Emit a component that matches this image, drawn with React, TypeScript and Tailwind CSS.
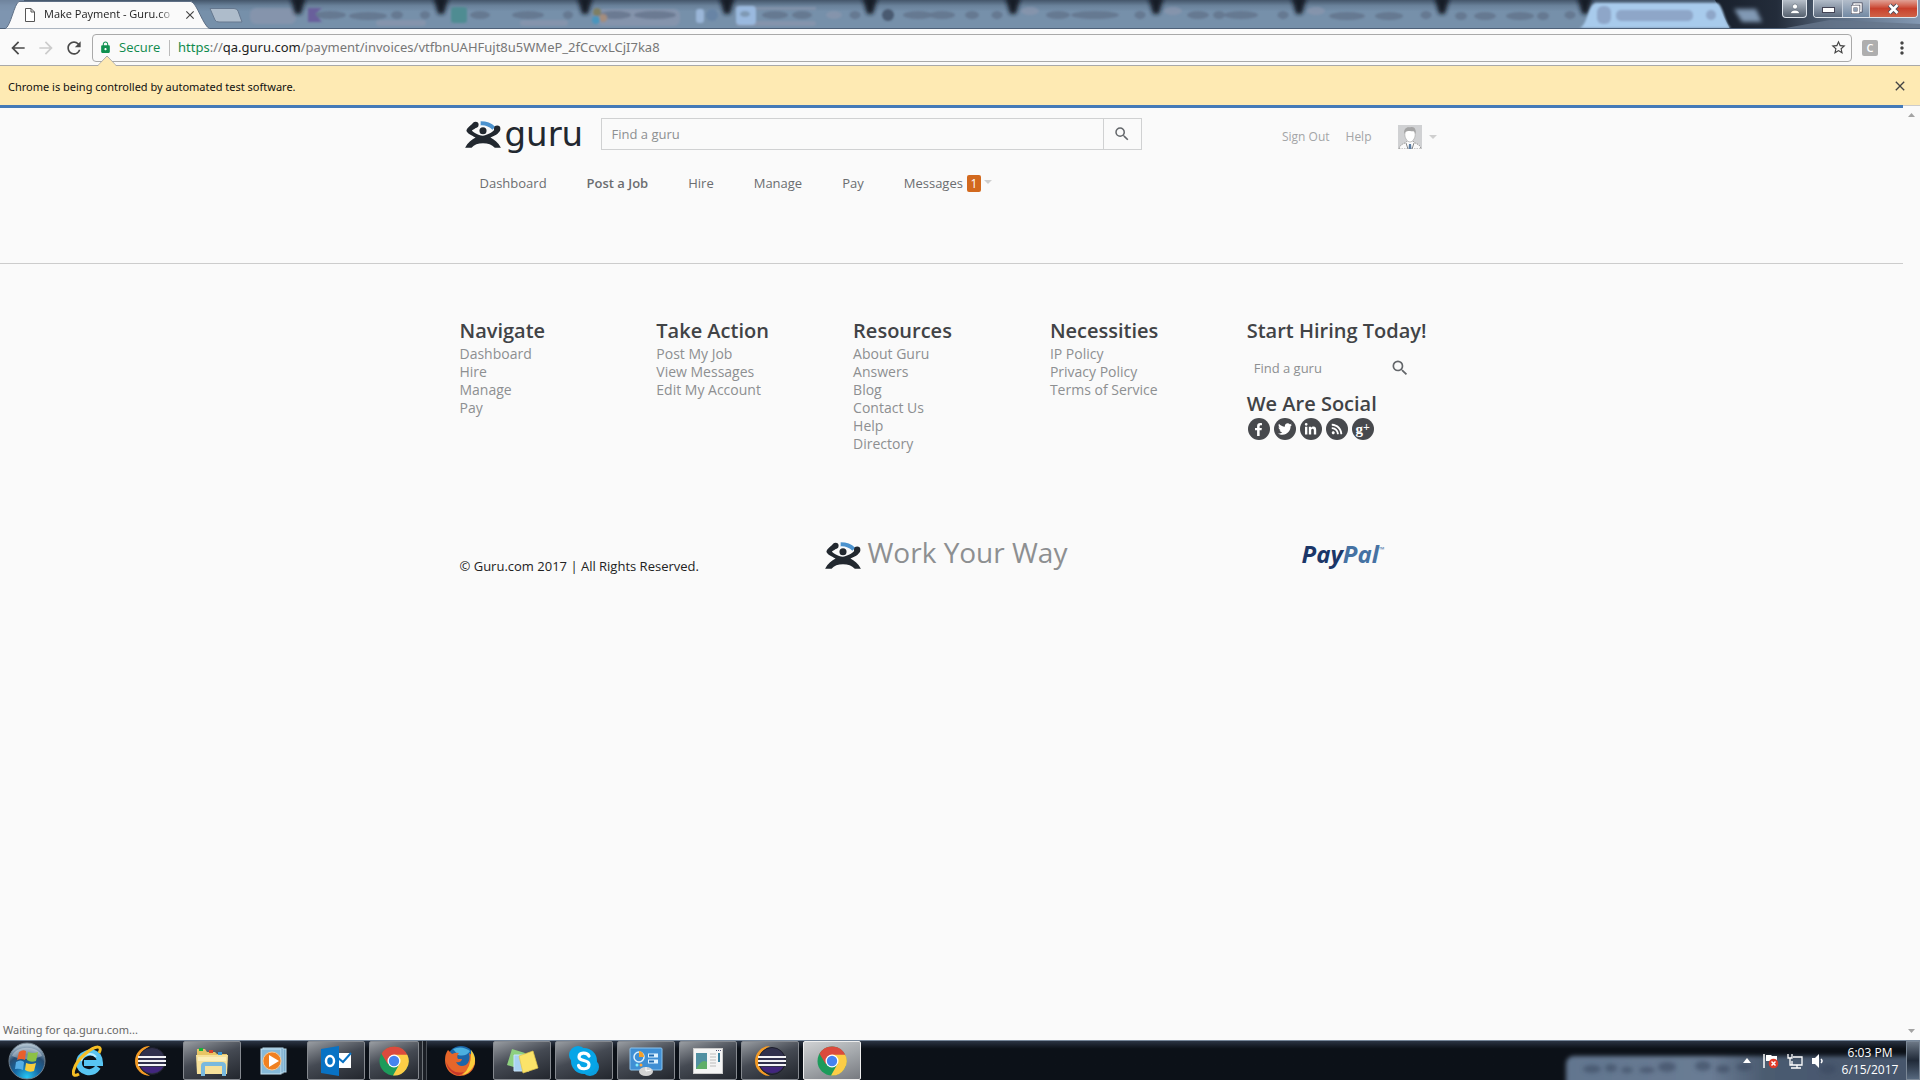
import React from "react";
import { FaFacebookF, FaTwitter, FaLinkedinIn, FaRss } from "react-icons/fa";
import { MdSearch, MdArrowBack, MdArrowForward, MdRefresh, MdLock, MdStarBorder, MdMoreVert, MdClose } from "react-icons/md";

function TabStripBackdrop() {
  const notches = [298, 441, 585, 727, 870, 1013, 1156, 1299, 1442, 1585];
  const smudges = [
    [330, 14, 30], [368, 15, 36], [397, 14, 10], [425, 14, 8], [480, 14, 18], [528, 14, 30], [568, 14, 8],
    [615, 14, 30], [655, 14, 40], [775, 14, 24], [802, 14, 18], [855, 14, 9], [918, 14, 28], [942, 14, 24],
    [972, 14, 12], [997, 14, 9], [1058, 14, 22], [1095, 14, 46], [1140, 14, 9], [1198, 14, 20], [1219, 14, 10],
    [1241, 14, 32], [1283, 14, 9], [1347, 15, 34], [1389, 15, 26], [1426, 14, 9], [1461, 15, 10], [1485, 15, 20],
    [1520, 15, 26], [1543, 15, 10], [1570, 14, 9],
  ];
  return (
    <svg className="absolute inset-0 h-full w-full" viewBox="0 0 1920 29" preserveAspectRatio="none" aria-hidden="true">
      <defs>
        <linearGradient id="glass" x1="0" y1="0" x2="0" y2="1">
          <stop offset="0" stopColor="#44566a" />
          <stop offset="0.2" stopColor="#6a829b" />
          <stop offset="0.4" stopColor="#7690aa" />
          <stop offset="1" stopColor="#7690aa" />
        </linearGradient>
        <linearGradient id="corner" x1="0" y1="0" x2="1" y2="0">
          <stop offset="0" stopColor="#18202c" />
          <stop offset="0.3" stopColor="#232c3a" />
          <stop offset="0.6" stopColor="#5b6c82" />
          <stop offset="1" stopColor="#8398b2" />
        </linearGradient>
        <filter id="soft" x="-20%" y="-50%" width="140%" height="200%"><feGaussianBlur stdDeviation="2" /></filter>
        <filter id="faint" x="-20%" y="-50%" width="140%" height="200%"><feGaussianBlur stdDeviation="1.3" /></filter>
      </defs>
      <rect width="1920" height="29" fill="url(#glass)" />
      <rect x="0" width="24" height="29" fill="#8297b2" opacity="0.7" />
      <g filter="url(#faint)" fill="#8a96ad" opacity="0.75">
        <rect x="250" y="8" width="46" height="16" rx="6" />
        <rect x="376" y="20" width="50" height="6" rx="3" />
        <rect x="520" y="20" width="48" height="6" rx="3" />
        <rect x="596" y="9" width="84" height="17" rx="6" />
        <rect x="736" y="7" width="80" height="3" />
        <rect x="736" y="21" width="80" height="5" rx="3" />
        <ellipse cx="834" cy="15" rx="8" ry="4" />
        <ellipse cx="1030" cy="11" rx="9" ry="4" />
        <ellipse cx="1173" cy="11" rx="9" ry="4" />
        <ellipse cx="1316" cy="11" rx="9" ry="4" />
      </g>
      <path d="M1715 0H1920V29H1730Z" fill="url(#corner)" />
      <path d="M1780 29 1830 20 1920 24V29Z" fill="#65758b" opacity="0.8" />
      <g filter="url(#soft)" fill="#141b26">
        {notches.map((x) => <path key={x} d={`M${x - 8} -4H${x + 8}L${x + 3} 14H${x - 3}Z`} />)}
      </g>
      <g filter="url(#faint)">
        <g fill="#5f6d85" opacity="0.65">
          {smudges.map(([x, y, w]) => <ellipse key={x} cx={x} cy={y + 1} rx={w / 2 + 1} ry="4" />)}
        </g>
        <path d="M308 8h14l-7 6 7 8h-14z" fill="#695f9b" />
        <rect x="451" y="7" width="16" height="16" rx="3" fill="#4f8c92" />
        <circle cx="597" cy="12" r="4" fill="#7f7f63" />
        <circle cx="603" cy="18" r="4" fill="#a58d7d" />
        <circle cx="596" cy="20" r="4" fill="#4a95bd" />
        <rect x="696" y="9" width="8" height="14" rx="3" fill="#9ab6d8" />
        <circle cx="712" cy="15" r="6" fill="#6884a5" />
        <rect x="736" y="6" width="20" height="19" rx="4" fill="#9ab9df" />
        <ellipse cx="745" cy="14" rx="5" ry="3" fill="#7f99b4" />
        <circle cx="888" cy="15" r="6" fill="#485a70" />
      </g>
      <path d="M1580 28C1588 24 1588 4 1596 3H1717C1723 4 1725 25 1731 28Z" fill="#a8cbec" filter="url(#faint)" />
      <g filter="url(#faint)" fill="#8ea6c8">
        <rect x="1597" y="6" width="14" height="18" rx="6" />
        <rect x="1616" y="10" width="77" height="11" rx="5" />
        <ellipse cx="1711" cy="15" rx="5" ry="5" />
      </g>
      <path d="M1734 9H1756L1762 22H1742Z" fill="#8199b4" filter="url(#soft)" />
      <path d="M210 8.500H234Q237 8.500 238 11L242 22H219Q216 22 215 20Z" fill="#aebccb" stroke="#66788f" />
      <path d="M0 28.500H1920" stroke="#4d6078" />
      <path d="M5 29C11 26 14 4 19 1.500H191C197 3 203 26 210 29Z" fill="#fafafa" stroke="#5f7086" />
    </svg>
  );
}

function TabStrip() {
  return (
    <div className="relative h-[29px] overflow-hidden">
      <TabStripBackdrop />
      <div className="relative flex h-full items-start justify-between">
        <div className="flex h-[29px] items-center pl-6 text-[11px] text-[#222]">
          <svg className="h-4 w-3" viewBox="0 0 12 16" fill="#fff" stroke="#555" aria-hidden="true">
            <path d="M1.500 1.500H7L10.500 5V14.500H1.500ZM7 1.500V5H10.500" />
          </svg>
          <span className="ml-2 w-[131px] whitespace-nowrap [mask-image:linear-gradient(to_right,#000_88%,transparent)]">Make Payment - Guru.co</span>
          <button aria-label="Close tab" className="ml-2 text-[#444]"><MdClose size={14} /></button>
        </div>
        <div className="flex pr-[2px]">
          <button aria-label="Profile" className="mr-[6px] flex h-[18px] w-[25px] items-center justify-center rounded-b border border-t-0 border-[#dfe5ec] bg-linear-to-b from-[#b8c0ca] to-[#56616f]">
            <svg width="10" height="11" viewBox="0 0 10 11" fill="#fff" stroke="#44505f" strokeWidth=".5"><circle cx="5" cy="3.500" r="2.500" /><path d="M.5 10.500C.5 6 9.500 6 9.500 10.500Z" /></svg>
          </button>
          <div className="flex h-[18px] overflow-hidden rounded-b border border-t-0 border-[#dfe5ec]">
            <button aria-label="Minimize" className="flex w-[29px] items-end justify-center border-r border-[#c5ced9] bg-linear-to-b from-[#b3bdca] to-[#5d6b7e] pb-1">
              <svg width="13" height="6"><rect x=".5" y=".5" width="12" height="5" fill="#fff" stroke="#445" /></svg>
            </button>
            <button aria-label="Restore" className="flex w-[27px] items-center justify-center border-r border-[#c5ced9] bg-linear-to-b from-[#b3bdca] to-[#7289a3]">
              <svg width="13" height="13" fill="none"><path d="M4 3.500V2h7v7H9.500" stroke="#445" strokeWidth="3" /><path d="M4 3.500V2h7v7H9.500" stroke="#fff" strokeWidth="1.500" /><rect x="2.500" y="4.500" width="6" height="6" stroke="#445" strokeWidth="3" /><rect x="2.500" y="4.500" width="6" height="6" stroke="#fff" strokeWidth="2" /></svg>
            </button>
            <button aria-label="Close window" className="flex w-[47px] items-center justify-center bg-linear-to-b from-[#e0a196] via-[#c8402c] to-[#cf6247]">
              <svg width="13" height="12"><path d="M2.500 2 10.500 10M10.500 2 2.500 10" stroke="#444b5c" strokeWidth="4.500" /><path d="M2.500 2 10.500 10M10.500 2 2.500 10" stroke="#fff" strokeWidth="2.600" /></svg>
            </button>
          </div>
        </div>
      </div>
    </div>
  );
}

function Toolbar() {
  return (
    <div className="relative flex h-[37px] items-center border-b border-[#a9a9a9] bg-[#fafafa] pt-px">
      <div className="flex w-[92px] items-center gap-2 pl-2 text-[#4a4a4a]">
        <button aria-label="Back"><MdArrowBack size={20} /></button>
        <button aria-label="Forward" className="text-[#ccc]"><MdArrowForward size={20} /></button>
        <button aria-label="Reload"><MdRefresh size={20} /></button>
      </div>
      <div className="flex h-7 flex-1 items-center rounded-sm border border-[#a9a9a9] pr-1 pl-[6px] text-[13px]">
        <MdLock size={13} className="text-[#0f9150]" />
        <span className="ml-[7px] w-[50px] text-[#0f8a4d]">Secure</span>
        <span className="mr-2 h-4 w-px bg-[#bbb]" />
        <p className="flex-1 font-['Noto_Sans',sans-serif] whitespace-nowrap text-[#777]">
          <span className="text-[#0f8a4d]">https</span>://<span className="text-[#222]">qa.guru.com</span>/payment/invoices/vtfbnUAHFujt8u5WMeP_2fCcvxLCjI7ka8
        </p>
        <button aria-label="Bookmark this page" className="text-[#444]"><MdStarBorder size={17} /></button>
      </div>
      <button aria-label="Extension" className="ml-[10px] h-4 w-4 rounded-xs bg-[#aeaeae] text-[11px] leading-4 font-semibold text-white">C</button>
      <button aria-label="Menu" className="mr-2 ml-[14px] text-[#444]"><MdMoreVert size={20} /></button>
      <svg className="absolute left-24 -bottom-px" width="22" height="11" viewBox="0 0 22 11" fill="#feeab3" aria-hidden="true">
        <path d="M0 10.500H2L11 1L20 10.500H22" stroke="#a9a9a9" /><path d="M2 11 11 2 20 11Z" />
      </svg>
    </div>
  );
}

function Figure({ className }: { className: string }) {
  return (
    <svg className={className} viewBox="30 28 106 80" aria-hidden="true">
      <path d="M76 29C94 29 108 34 119 45L111 54C101 45 90 40 76 41Z" fill="#4b92ce" />
      <g fill="#22282f">
        <circle cx="61" cy="39" r="9" />
        <circle cx="125" cy="51" r="9.500" />
        <circle cx="83" cy="57" r="10.500" />
        <path d="M53 35C42 45 34 51 34 57C36 65 48 70 61 77C50 83 37 92 30 107H49C57 98 68 94 83 94S109 98 118 107H136C129 92 116 83 105 77C118 72 131 65 134 54L119 51C113 60 100 68 83 72C67 69 54 62 50 56C54 53 60 50 68 44Z" />
      </g>
    </svg>
  );
}

const Caret = ({ className }: { className: string }) => (
  <svg className={className} width="8" height="4" viewBox="0 0 8 4" aria-hidden="true"><path d="M0 0H8L4 4Z" fill="#cfcfcf" /></svg>
);

function SiteHeader() {
  return (
    <header className="mx-auto w-full max-w-[984px] pt-[10px]">
      <div className="flex h-8 items-stretch pl-[5px]">
        <a href="#" aria-label="guru" className="flex w-[136px] items-center text-[#22282f]">
          <Figure className="h-[27px] w-[36px] shrink-0" />
          <span className="ml-1 font-['DejaVu_Sans'] text-[34px] leading-7">guru</span>
        </a>
        <form className="flex w-[541px]">
          <input aria-label="Find a guru" placeholder="Find a guru" className="min-w-0 flex-1 border border-[#d0d1d2] bg-transparent px-[10px] pt-[2px] text-[13px] placeholder:text-[#8d8f91]" />
          <button type="button" aria-label="Search" className="flex w-[38px] items-center justify-center border border-l-0 border-[#d0d1d2] text-[#63666a]"><MdSearch size={18} /></button>
        </form>
        <div className="ml-auto flex items-center gap-4 pt-[6px] pr-[5px] text-[12px] text-[#a3a5a7]">
          <a href="#">Sign Out</a>
          <a href="#">Help</a>
          <a href="#" aria-label="Account" className="ml-[10px] flex items-center gap-[7px]">
            <svg width="24" height="24" viewBox="0 0 24 24">
              <rect width="24" height="24" fill="#d0d1d3" />
              <path d="M1 24C2 18 8 19 9 16H15C16 19 22 18 23 24Z" fill="#fafafa" stroke="#999" strokeDasharray="1.500 1" />
              <path d="M7 8C7 4 9 3 12 3S17 4 17 8C18 12 15 17 12 17S6 12 7 8Z" fill="#fff" stroke="#aaa" strokeWidth=".7" />
              <path d="M6.500 9C5 4 9 1.500 12 2.500C16 1 18.500 4 17.500 9C16 5 15 7 12 6C9 6 7.500 6 6.500 9Z" fill="#a5a5a5" />
              <path d="M11 19H13L13.500 24H10.500Z" fill="#5c7da3" /><path d="M8 18 10 24M16 18 14 24" stroke="#888" />
            </svg>
            <Caret className="mr-[2px]" />
          </a>
        </div>
      </div>
      <nav className="mt-[23px] flex h-[22px] items-center gap-10 pl-5 text-[13px] text-[#6b6d70]">
        <a href="#">Dashboard</a>
        <a href="#" className="font-semibold">Post a Job</a>
        <a href="#">Hire</a>
        <a href="#">Manage</a>
        <a href="#">Pay</a>
        <a href="#" className="flex items-center">
          Messages
          <span className="mb-px ml-1 h-[17px] w-[14px] rounded-xs bg-[#d2691e] text-center text-[12px] leading-[17px] text-white">1</span>
          <Caret className="mb-1 ml-[3px]" />
        </a>
      </nav>
    </header>
  );
}

const columns = [
  { title: "Navigate", links: ["Dashboard", "Hire", "Manage", "Pay"] },
  { title: "Take Action", links: ["Post My Job", "View Messages", "Edit My Account"] },
  { title: "Resources", links: ["About Guru", "Answers", "Blog", "Contact Us", "Help", "Directory"] },
  { title: "Necessities", links: ["IP Policy", "Privacy Policy", "Terms of Service"] },
];

const heading = "whitespace-nowrap text-[20px] leading-6 font-semibold text-[#414346]";
const social = "flex h-[22px] w-[22px] items-center justify-center rounded-full bg-[#47494d] text-white";

function SiteFooter() {
  return (
    <footer className="mt-[68px] border-t border-[#ccc] pt-[55px]">
      <div className="mx-auto max-w-[984px]">
        <div className="grid grid-cols-5">
          {columns.map((c) => (
            <section key={c.title}>
              <h2 className={heading}>{c.title}</h2>
              <ul className="mt-[2px] text-[14px] leading-[18px] text-[#8d8f91]">
                {c.links.map((l) => <li key={l}><a href="#">{l}</a></li>)}
              </ul>
            </section>
          ))}
          <section>
            <h2 className={heading}>Start Hiring Today!</h2>
            <form className="flex h-[49px] items-center pl-[7px]">
              <input aria-label="Find a guru" placeholder="Find a guru" className="w-[136px] bg-transparent pt-[2px] text-[13px] placeholder:text-[#8d8f91]" />
              <button type="button" aria-label="Search" className="text-[#63666a]"><MdSearch size={20} /></button>
            </form>
            <h2 className={heading}>We Are Social</h2>
            <div className="mt-[2px] flex gap-1 pl-px">
              <a href="#" aria-label="Facebook" className={social}><FaFacebookF size={13} /></a>
              <a href="#" aria-label="Twitter" className={social}><FaTwitter size={14} /></a>
              <a href="#" aria-label="LinkedIn" className={social}><FaLinkedinIn size={13} /></a>
              <a href="#" aria-label="RSS" className={social}><FaRss size={12} /></a>
              <a href="#" aria-label="Google Plus" className={`${social} font-['Liberation_Serif'] text-[15px] leading-4 font-bold`}>g<span className="mb-1 text-[12px]">+</span></a>
            </div>
          </section>
        </div>
        <div className="mt-[75px] grid h-10 grid-cols-[365fr_477fr_142fr] items-center whitespace-nowrap">
          <p className="pt-[29px] text-[13px] text-[#222]">© Guru.com 2017 | All Rights Reserved.</p>
          <p className="flex items-center text-[28px] leading-10 text-[#8d8f91]">
            <Figure className="mt-[6px] mr-[7px] h-[27px] w-[36px]" />
            Work Your Way
          </p>
          <p className="flex items-center pt-1 text-[24px] leading-6 font-bold text-[#1b3668] italic">Pay<span className="text-[#4572a3]">Pal</span><span className="self-start text-[7px] leading-4 font-normal text-[#4572a3]">™</span></p>
        </div>
      </div>
    </footer>
  );
}

const OrbIcon = () => (
  <svg width="38" height="38" viewBox="0 0 38 38">
    <defs><radialGradient id="orb" cx=".5" cy=".95" r=".9"><stop offset="0" stopColor="#27c8f5" /><stop offset=".4" stopColor="#1668a4" /><stop offset=".7" stopColor="#274c70" /><stop offset="1" stopColor="#b0c2d0" /></radialGradient></defs>
    <circle cx="19" cy="19" r="18" fill="url(#orb)" stroke="#71818f" />
    <path d="M4 14C8 3 30 3 34 14C26 18 12 18 4 14Z" fill="#fff" opacity=".35" />
    <path d="M11 10Q15 7 18 9L17 18Q13 16 9 18Z" fill="#e8602c" /><path d="M20 10Q25 12 30 10L28 19Q23 21 19 18Z" fill="#8dc145" />
    <path d="M8 20Q13 17 16 20L15 28Q11 26 7 27Z" fill="#56aee6" /><path d="M18 21Q23 23 28 21L26 29Q21 31 17 28Z" fill="#f9ce3d" />
  </svg>
);
const IeIcon = () => (
  <svg width="32" height="32" viewBox="0 0 32 32" fill="none">
    <path d="M26 22C20 31 7 27 7 18S20 4 26 11Q28 14 28 18H12" stroke="#58c5f2" strokeWidth="6" />
    <path d="M9 16C12 8 20 7 24 12" stroke="#b8ebff" strokeWidth="2" />
    <path d="M7 29C-3 35 1 19 13 9S31 1 27 8" stroke="#f4bd24" strokeWidth="3" />
  </svg>
);
const EclipseIcon = () => (
  <svg width="32" height="32" viewBox="0 0 32 32">
    <path d="M16 1A15 15 0 0 0 16 31A17 17 0 0 1 16 1Z" fill="#f49b25" />
    <circle cx="18" cy="16" r="13.500" fill="#30304c" stroke="#1c1d2a" /><path d="M7 22H29A13 13 0 0 1 7 22Z" fill="#42267f" />
    <path d="M4 12H32M4 16H32M4 20H32" stroke="#f2f2f5" strokeWidth="2.200" />
  </svg>
);
const FolderIcon = () => (
  <svg width="34" height="32" viewBox="0 0 34 32">
    <path d="M2 4H10L12 7H20L22 9H32V28H2Z" fill="#e8c565" /><path d="M4 3h4v3H4z" fill="#18b43a" /><path d="M14 5h4v3h-4z" fill="#d8422a" /><path d="M23 7h4v3h-4z" fill="#3897d8" />
    <path d="M1 10H33L32 29H2Z" fill="#f6e19b" /><path d="M3 12H31V16H3Z" fill="#fbeebb" />
    <path d="M8 31V21Q8 19 10 19H27Q29 19 29 21V31" fill="none" stroke="#79b9de" strokeWidth="4" />
  </svg>
);
const PlayerIcon = () => (
  <svg width="28" height="28" viewBox="0 0 28 28">
    <rect x="6" y="2" width="20" height="23" fill="#78aacb" stroke="#b9dcee" /><rect x="3" y="1" width="20" height="25" fill="#5c91b9" stroke="#b9dcee" /><rect x="1" y="2" width="20" height="25" fill="#86b9d8" stroke="#c9e5f3" />
    <circle cx="12" cy="14" r="9" fill="#f08020" stroke="#f8c791" /><path d="M9 8V20L19 14Z" fill="#fff" />
  </svg>
);
const OutlookIcon = () => (
  <svg width="32" height="32" viewBox="0 0 32 32">
    <rect x="15" y="8" width="16" height="15" fill="#fff" /><path d="M17 12 23 17 31 8" fill="none" stroke="#0872c4" strokeWidth="2" />
    <path d="M1 4 19 1V31L1 28Z" fill="#0872c4" /><ellipse cx="10" cy="16" rx="4" ry="5" fill="none" stroke="#fff" strokeWidth="2.500" />
  </svg>
);
const ChromeIcon = () => (
  <svg width="30" height="30" viewBox="0 0 30 30">
    <circle cx="15" cy="15" r="14.500" fill="#1d9b5b" /><path d="M2.500 7.700A14.500 14.500 0 0 1 28.500 9.500H15L8.700 18Z" fill="#db4a3d" />
    <path d="M15 8.800H28.300A14.500 14.500 0 0 1 14 29.500L20.500 18Z" fill="#fccd46" /><circle cx="15" cy="15" r="6.500" fill="#fff" /><circle cx="15" cy="15" r="5.200" fill="#4583f0" />
  </svg>
);
const FirefoxIcon = () => (
  <svg width="32" height="32" viewBox="0 0 32 32">
    <circle cx="17" cy="15" r="14" fill="#1c66a8" /><path d="M9 4Q18 0 26 6Q22 12 14 10Z" fill="#4bb0df" />
    <path d="M4 5 8 9Q12 7 15 8Q12 11 14 14H18Q17 18 12 17Q15 23 22 20Q27 16 25 8Q32 12 31 19C29 28 21 31 16 31C7 31 1 24 1 15Q1 9 4 5Z" fill="#e6662a" />
    <path d="M27 5Q34 14 29 22Q25 29 18 30Q28 23 27 5Z" fill="#f9cd3c" /><path d="M2 17Q8 30 20 27Q17 31 13 30Q4 27 2 17Z" fill="#c7382b" />
  </svg>
);
const NotesIcon = () => (
  <svg width="34" height="30" viewBox="0 0 34 30">
    <path d="M7 3 20 7 15 23 2 19Z" fill="#8ed07f" /><path d="M9 9H24V25H9Z" fill="#a9d1f1" stroke="#c8e5fa" /><path d="M14 10 28 5 33 22 18 27Z" fill="#fbe369" stroke="#e3c54a" strokeWidth=".7" />
  </svg>
);
const SkypeIcon = () => (
  <svg width="32" height="32" viewBox="0 0 32 32">
    <circle cx="10" cy="10" r="9" fill="#06a5e7" /><circle cx="22" cy="22" r="9" fill="#0b9fe0" /><circle cx="16" cy="16" r="13" fill="#06a5e7" />
    <path d="M21 11C19 7 11 7 11 12C11 17 21 14 21 19.500C21 25 12 25 10.500 20.500" fill="none" stroke="#fff" strokeWidth="3.200" strokeLinecap="round" />
  </svg>
);
const PanelIcon = () => (
  <svg width="34" height="30" viewBox="0 0 34 30">
    <rect x="1" y="2" width="32" height="22" rx="1" fill="#3f8fd4" stroke="#8cc3ec" /><circle cx="10" cy="11" r="5" fill="none" stroke="#d8efff" strokeWidth="1.500" /><path d="M10 11V5A5.500 5.500 0 0 1 15 11Z" fill="#f4a02a" />
    <path d="M19 9.500h10M19 15.500h10" stroke="#dff3ff" strokeWidth="4" /><path d="M20 9.500h5M20 15.500h5" stroke="#1f6bb2" strokeWidth="2" /><circle cx="8" cy="19" r="1.500" fill="#7ff0ff" /><circle cx="12" cy="19" r="1.500" fill="#ffa63c" />
    <ellipse cx="17" cy="25.500" rx="7" ry="4.500" fill="#d4d4d4" /><path d="M17 21V25L22 24" stroke="#fff" fill="none" />
  </svg>
);
const WindowIcon = () => (
  <svg width="30" height="26" viewBox="0 0 30 26">
    <rect x=".5" y=".5" width="29" height="25" fill="#f5f5f5" stroke="#ccc" /><path d="M23 2.500h5" stroke="#557" strokeDasharray="1 1" />
    <rect x="3" y="5" width="11" height="16" fill="#5190a2" /><path d="M3 21Q9 10 14 14V21Z" fill="#5fae68" /><path d="M17 6H23M17 9H23M17 12H23M17 15H23M17 18H23" stroke="#bbb" /><path d="M26 5V14" stroke="#377f9e" strokeWidth="2" />
  </svg>
);

const slot = "flex h-[39px] w-[58px] items-center justify-center";
const running = "flex h-[39px] w-[58px] items-center justify-center rounded-xs border border-[#85898f] bg-linear-160 from-[#999da2] via-[#454a53] via-45% to-[#23272e]";

function Taskbar() {
  return (
    <div className="relative flex h-10 items-start overflow-hidden border-t border-[#77879a] bg-linear-to-b from-[#2b3443] to-[#0c1118] to-20% text-white">
      <button aria-label="Start" className="flex h-[39px] w-[54px] items-center justify-center"><OrbIcon /></button>
      <div className="ml-[5px] flex flex-1 items-center gap-1">
        <button aria-label="Internet Explorer" className={slot}><IeIcon /></button>
        <button aria-label="Eclipse" className={slot}><EclipseIcon /></button>
        <button aria-label="File Explorer" className={running}><FolderIcon /></button>
        <button aria-label="Media Player" className={slot}><PlayerIcon /></button>
        <button aria-label="Outlook" className={running}><OutlookIcon /></button>
        <span className="flex w-[58px]">
          <button aria-label="Chrome" className="flex h-[39px] w-[50px] items-center justify-center rounded-xs border border-[#85898f] bg-linear-160 from-[#999da2] via-[#454a53] via-45% to-[#23272e]"><ChromeIcon /></button>
          <span className="h-[39px] w-1 border-r border-[#6d7278] bg-[#23272e]" />
          <span className="h-[39px] w-1 border-r border-[#4b5057] bg-[#1a1e25]" />
        </span>
        <button aria-label="Firefox" className={slot}><FirefoxIcon /></button>
        <button aria-label="Sticky Notes" className={running}><NotesIcon /></button>
        <button aria-label="Skype" className={running}><SkypeIcon /></button>
        <button aria-label="Control Panel" className={running}><PanelIcon /></button>
        <button aria-label="Application" className={running}><WindowIcon /></button>
        <button aria-label="Eclipse window" className={running}><EclipseIcon /></button>
        <button aria-label="Chrome window" className="flex h-[39px] w-[58px] items-center justify-center rounded-xs border border-[#eee] bg-linear-160 from-[#d0d2d3] via-[#a3a7ab] to-[#777a80]"><ChromeIcon /></button>
      </div>
      <svg className="absolute top-0 right-0" width="360" height="39" viewBox="0 0 360 39" aria-hidden="true">
        <defs>
          <linearGradient id="haze" x1="0" x2="1"><stop offset="0" stopColor="#62768f" /><stop offset=".4" stopColor="#6a7c94" /><stop offset=".55" stopColor="#4b5b70" /><stop offset="1" stopColor="#46566c" /></linearGradient>
          <filter id="hazeblur" x="-10%" y="-50%" width="120%" height="200%"><feGaussianBlur stdDeviation="2" /></filter>
        </defs>
        <rect x="6" y="15" width="362" height="34" rx="8" fill="url(#haze)" filter="url(#hazeblur)" />
        <g fill="#3b4a60" opacity=".6" filter="url(#hazeblur)">
          <ellipse cx="32" cy="28" rx="9" ry="4" /><ellipse cx="51" cy="27" rx="6" ry="4" /><ellipse cx="67" cy="29" rx="6" ry="3" /><ellipse cx="87" cy="29" rx="8" ry="3" />
          <ellipse cx="107" cy="26" rx="9" ry="5" /><ellipse cx="143" cy="25" rx="8" ry="5" /><ellipse cx="163" cy="28" rx="7" ry="4" /><ellipse cx="184" cy="26" rx="8" ry="4" /><ellipse cx="268" cy="28" rx="8" ry="5" />
        </g>
      </svg>
      <div className="relative flex h-[39px] items-center">
        <svg className="mr-3" width="8" height="5"><path d="M0 5 4 0 8 5Z" fill="#fff" /></svg>
        <svg className="mr-2" width="16" height="16" viewBox="0 0 16 16"><path d="M1 1V15" stroke="#fff" strokeWidth="1.500" /><path d="M3 2H8L9 3H14V9H8L7 8H3Z" fill="#fff" /><circle cx="10.500" cy="10.500" r="4.800" fill="#e03a28" /><path d="M8.500 8.500 12.500 12.500M12.500 8.500 8.500 12.500" stroke="#fff" strokeWidth="1.500" /></svg>
        <svg className="mr-2" width="16" height="16" viewBox="0 0 16 16" fill="none" stroke="#fff" strokeWidth="1.300"><path d="M6 4H15V12H5V8M4 15H14M10 12V15M1 1V5H5V1M3 5V12H5" /></svg>
        <svg className="mr-3" width="16" height="16" viewBox="0 0 16 16"><path d="M1 5H4L8 1V15L4 11H1Z" fill="#fff" /><path d="M10 6Q12 8 10 10" fill="none" stroke="#fff" strokeWidth="1.500" /></svg>
        <p className="w-[62px] text-center text-[12px] leading-[17px] whitespace-nowrap">6:03 PM<br />6/15/2017</p>
        <button aria-label="Show desktop" className="ml-[5px] h-[39px] w-[14px] border border-[#7a8796] bg-linear-to-b from-[#6c7785] via-[#202a38] to-[#56687e]" />
      </div>
    </div>
  );
}

export default function App() {
  return (
    <div className="flex min-h-screen flex-col bg-[#fafafa] font-['Open_Sans',sans-serif]">
      <TabStrip />
      <Toolbar />
      <div className="flex h-[39px] items-center justify-between bg-[#feeab3] pr-3 pl-2 font-['Noto_Sans',sans-serif] text-[11px] text-[#111]">
        <p className="pt-1">Chrome is being controlled by automated test software.</p>
        <button aria-label="Dismiss" className="text-[#444]"><MdClose size={16} /></button>
      </div>
      <div className="flex flex-1">
        <main className="flex flex-1 flex-col border-t-3 border-[#447ab8]">
          <SiteHeader />
          <SiteFooter />
          <p className="mt-auto pb-[2px] pl-[3px] font-['Noto_Sans',sans-serif] text-[11px] leading-4 text-[#666]">Waiting for qa.guru.com...</p>
        </main>
        <div className="flex w-[17px] flex-col items-center justify-between border-t border-[#ccc] py-[7px]" aria-hidden="true">
          <svg width="7" height="4"><path d="M0 4 3.500 0 7 4Z" fill="#a3a3a3" /></svg>
          <svg width="7" height="4"><path d="M0 0 3.500 4 7 0Z" fill="#a3a3a3" /></svg>
        </div>
      </div>
      <Taskbar />
    </div>
  );
}
